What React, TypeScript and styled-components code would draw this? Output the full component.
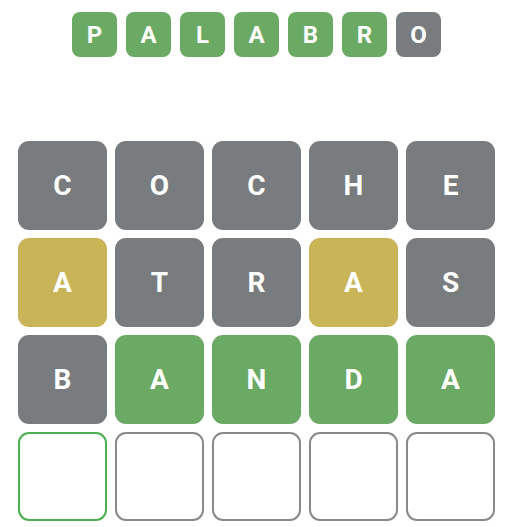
import React from "react";
import styled, { createGlobalStyle } from "styled-components";

const Global = createGlobalStyle`
  html, body { margin: 0; padding: 0; background: #ffffff; }
  body { font-family: Roboto, "Liberation Sans", Arial, sans-serif; }
`;

type State = "correct" | "present" | "absent" | "empty" | "active";

const colors: Record<string, string> = {
  correct: "#6aaa64",
  present: "#c9b458",
  absent: "#787c7e",
};

const Page = styled.div`
  width: 513px;
  display: flex;
  flex-direction: column;
  align-items: center;
  padding-top: 12px;
`;

const Title = styled.div`
  display: flex;
  gap: 9px;
`;

const TitleTile = styled.div<{ $s: State }>`
  width: 45px;
  height: 45px;
  border-radius: 8px;
  background: ${(p) => colors[p.$s]};
  color: #fff;
  display: flex;
  align-items: center;
  justify-content: center;
  font-weight: 700;
  font-size: 24px;
`;

const Board = styled.div`
  margin-top: 84px;
  display: grid;
  grid-template-columns: repeat(5, 89px);
  grid-auto-rows: 89px;
  gap: 8px;
`;

const Tile = styled.div<{ $s: State }>`
  box-sizing: border-box;
  border-radius: 11px;
  display: flex;
  align-items: center;
  justify-content: center;
  color: #fff;
  font-weight: 700;
  font-size: 28px;
  background: ${(p) => colors[p.$s] ?? "#ffffff"};
  border: ${(p) =>
    p.$s === "empty"
      ? "2.5px solid #878a8c"
      : p.$s === "active"
      ? "2.5px solid #4caf50"
      : "none"};
`;

const title: [string, State][] = [
  ["P", "correct"],
  ["A", "correct"],
  ["L", "correct"],
  ["A", "correct"],
  ["B", "correct"],
  ["R", "correct"],
  ["O", "absent"],
];

const rows: [string, State][][] = [
  [["C", "absent"], ["O", "absent"], ["C", "absent"], ["H", "absent"], ["E", "absent"]],
  [["A", "present"], ["T", "absent"], ["R", "absent"], ["A", "present"], ["S", "absent"]],
  [["B", "absent"], ["A", "correct"], ["N", "correct"], ["D", "correct"], ["A", "correct"]],
  [["", "active"], ["", "empty"], ["", "empty"], ["", "empty"], ["", "empty"]],
];

export default function App() {
  return (
    <>
      <Global />
      <Page>
        <Title>
          {title.map(([l, s], i) => (
            <TitleTile key={i} $s={s}>{l}</TitleTile>
          ))}
        </Title>
        <Board>
          {rows.flat().map(([l, s], i) => (
            <Tile key={i} $s={s}>{l}</Tile>
          ))}
        </Board>
      </Page>
    </>
  );
}
